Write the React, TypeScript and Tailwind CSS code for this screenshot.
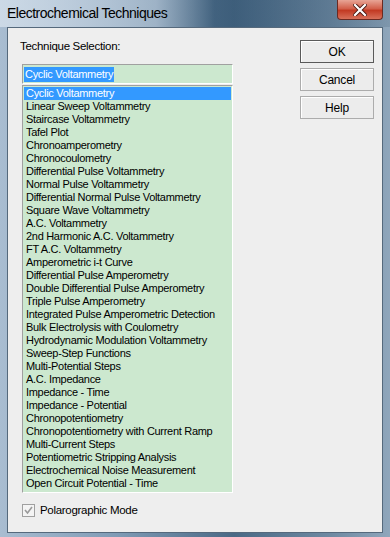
const techniques = [
  'Cyclic Voltammetry',
  'Linear Sweep Voltammetry',
  'Staircase Voltammetry',
  'Tafel Plot',
  'Chronoamperometry',
  'Chronocoulometry',
  'Differential Pulse Voltammetry',
  'Normal Pulse Voltammetry',
  'Differential Normal Pulse Voltammetry',
  'Square Wave Voltammetry',
  'A.C. Voltammetry',
  '2nd Harmonic A.C. Voltammetry',
  'FT A.C. Voltammetry',
  'Amperometric i-t Curve',
  'Differential Pulse Amperometry',
  'Double Differential Pulse Amperometry',
  'Triple Pulse Amperometry',
  'Integrated Pulse Amperometric Detection',
  'Bulk Electrolysis with Coulometry',
  'Hydrodynamic Modulation Voltammetry',
  'Sweep-Step Functions',
  'Multi-Potential Steps',
  'A.C. Impedance',
  'Impedance - Time',
  'Impedance - Potential',
  'Chronopotentiometry',
  'Chronopotentiometry with Current Ramp',
  'Multi-Current Steps',
  'Potentiometric Stripping Analysis',
  'Electrochemical Noise Measurement',
  'Open Circuit Potential - Time',
]

const DialogButton = ({ label, primary }: { label: string; primary?: boolean }) => (
  <button
    className={`w-[74px] h-[23px] bg-[#ececec] text-black text-[12px] tracking-[-0.2px] flex items-center justify-center border ${
      primary ? 'border-[#5a5a5a]' : 'border-[#acacac]'
    } shadow-[inset_1px_1px_0_#fff]`}
  >
    {label}
  </button>
)

const App = () => {
  return (
    <div className="w-[390px] h-[537px] overflow-hidden relative bg-[linear-gradient(90deg,#a9bdd1_0%,#7f9bb5_30%,#4a6985_60%,#6f8aa2_85%,#8fa6bb_100%)] font-['Liberation_Sans',Arial,sans-serif]">
      <div className="h-[27px] flex items-center pl-[7px] bg-[linear-gradient(90deg,rgba(210,222,234,0.85)_0%,rgba(190,205,220,0.6)_40%,rgba(40,75,105,0.4)_55%,rgba(60,90,115,0.2)_100%)]">
        <span className="text-[14px] text-black tracking-[-0.5px]">Electrochemical Techniques</span>
      </div>

      <div className="absolute top-0 right-[7px] w-[46px] h-[20px] rounded-b-[4px] border border-t-0 border-[#6b2a22] bg-[linear-gradient(180deg,#e8a596_0%,#d2604b_45%,#c23a23_55%,#d8705a_100%)] flex items-center justify-center">
        <svg width="14" height="12" viewBox="0 0 14 12">
          <path d="M2 1 L12 11 M12 1 L2 11" stroke="#4a1a14" strokeWidth="4" strokeLinecap="square" />
          <path d="M2 1 L12 11 M12 1 L2 11" stroke="#ffffff" strokeWidth="2.2" strokeLinecap="square" />
        </svg>
      </div>

      <div className="mx-[7px] h-[506px] bg-[#eeeeee] border border-[#55697c] flex">
        <div className="w-[226px] pl-[11px] pt-[11px] text-[11px] tracking-[-0.3px] text-black">
          <div className="h-[14px] leading-[14px] pl-[1px] text-[11.5px]">Technique Selection:</div>

          <div className="mt-[11px] ml-[3px] w-[211px] h-[20px] bg-[#cce8cf] border border-[#a0a0a0] border-b-white border-r-white flex items-center px-[1px]">
            <span className="bg-[#3399ff] text-white leading-[15px] px-[1px]">Cyclic Voltammetry</span>
          </div>

          <div className="mt-[1px] ml-[3px] w-[211px] h-[408px] bg-[#cce8cf] border border-[#a0a0a0] border-b-white border-r-white pt-[1px] px-[1px]">
            {techniques.map((t, i) => (
              <div
                key={t}
                className={`h-[13px] leading-[13px] px-[2px] whitespace-nowrap ${
                  i === 0 ? 'bg-[#3399ff] text-white' : 'text-black'
                }`}
              >
                {t}
              </div>
            ))}
          </div>

          <div className="mt-[9px] ml-[3px] flex items-center gap-[5px] text-[11.5px]">
            <div className="w-[13px] h-[13px] border border-[#a0a0a0] bg-[#f4f4f4] flex items-center justify-center">
              <svg width="9" height="9" viewBox="0 0 9 9">
                <path d="M1 4 L3.5 7 L8 1" stroke="#9a9a9a" strokeWidth="1.6" fill="none" />
              </svg>
            </div>
            <span>Polarographic Mode</span>
          </div>
        </div>

        <div className="ml-[66px] pt-[12px] flex flex-col gap-[5px]">
          <DialogButton label="OK" primary />
          <DialogButton label="Cancel" />
          <DialogButton label="Help" />
        </div>
      </div>
    </div>
  )
}

export default App
